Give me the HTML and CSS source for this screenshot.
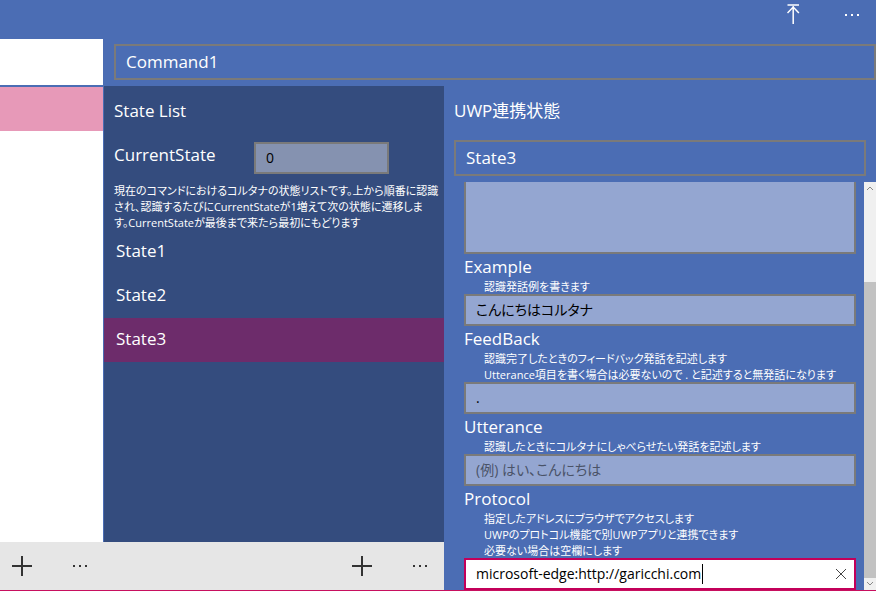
FILE: index.html
```html
<!DOCTYPE html>
<html lang="ja">
<head>
<meta charset="utf-8">
<title>Command1</title>
<link rel="stylesheet" href="styles.css">
</head>
<body>
<header class="topbar">
  <button class="icon-btn" type="button" aria-label="Upload">
    <svg class="upload" width="14" height="21" viewBox="0 0 14 21"><path d="M.5 1h11.5M6.2 2v18M.5 9l5.7-6 5.7 6"/></svg>
  </button>
  <button class="icon-btn" type="button" aria-label="More">
    <svg class="dots" width="14" height="2" viewBox="0 0 14 2"><path d="M0 0h2v2H0zM6 0h2v2H6zM12 0h2v2h-2z"/></svg>
  </button>
</header>
<main class="workspace">
  <aside class="commands">
    <ul class="command-list">
      <li class="command"></li>
      <li class="command selected"></li>
    </ul>
    <div class="appbar">
      <button class="icon-btn" type="button" aria-label="Add command">
        <svg class="plus" width="20" height="20" viewBox="0 0 20 20"><path d="M0 10h20M10 0v20"/></svg>
      </button>
      <button class="icon-btn" type="button" aria-label="More commands">
        <svg class="dots" width="14" height="2" viewBox="0 0 14 2"><path d="M0 0h2v2H0zM6 0h2v2H6zM12 0h2v2h-2z"/></svg>
      </button>
    </div>
  </aside>
  <div class="detail">
    <div class="command-row"><input class="box title-box" type="text" value="Command1" aria-label="Command name"></div>
    <div class="panes">
      <section class="states">
        <h2 class="heading">State List</h2>
        <div class="current">
          <label class="label" for="current">CurrentState</label>
          <input class="box field-box count" id="current" type="text" value="0">
        </div>
        <p class="note">現在のコマンドにおけるコルタナの状態リストです。上から順番に認識<br>され、認識するたびにCurrentStateが1増えて次の状態に遷移しま<br>す。CurrentStateが最後まで来たら最初にもどります</p>
        <ul class="state-list">
          <li><button class="state" type="button">State1</button></li>
          <li><button class="state" type="button">State2</button></li>
          <li><button class="state selected" type="button">State3</button></li>
        </ul>
        <div class="appbar end">
          <button class="icon-btn" type="button" aria-label="Add state">
            <svg class="plus" width="20" height="20" viewBox="0 0 20 20"><path d="M0 10h20M10 0v20"/></svg>
          </button>
          <button class="icon-btn" type="button" aria-label="More state commands">
            <svg class="dots" width="14" height="2" viewBox="0 0 14 2"><path d="M0 0h2v2H0zM6 0h2v2H6zM12 0h2v2h-2z"/></svg>
          </button>
        </div>
      </section>
      <section class="editor">
        <h2 class="heading">UWP連携状態</h2>
        <div class="name-row"><input class="box title-box" type="text" value="State3" aria-label="State name"></div>
        <div class="scroller">
          <form class="fields">
            <textarea class="box field-box area" aria-label="Listen for"></textarea>
            <label class="label" for="example">Example</label>
            <p class="hint">認識発話例を書きます</p>
            <input class="box field-box" id="example" type="text" value="こんにちはコルタナ">
            <label class="label" for="feedback">FeedBack</label>
            <p class="hint">認識完了したときのフィードバック発話を記述します<br>Utterance項目を書く場合は必要ないので . と記述すると無発話になります</p>
            <input class="box field-box" id="feedback" type="text" value=".">
            <label class="label" for="utterance">Utterance</label>
            <p class="hint">認識したときにコルタナにしゃべらせたい発話を記述します</p>
            <input class="box field-box" id="utterance" type="text" placeholder="(例) はい、こんにちは">
            <label class="label" for="protocol">Protocol</label>
            <p class="hint">指定したアドレスにブラウザでアクセスします<br>UWPのプロトコル機能で別UWPアプリと連携できます<br>必要ない場合は空欄にします</p>
            <div class="active-field">
              <input class="box field-box active" id="protocol" type="text" value="microsoft-edge:http://garicchi.com">
              <span class="caret"></span>
              <button class="clear" type="button" aria-label="Clear">
                <svg width="10" height="10" viewBox="0 0 10 10"><path d="M0 0l10 10M10 0L0 10"/></svg>
              </button>
            </div>
          </form>
          <div class="scrollbar">
            <svg width="8" height="5" viewBox="0 0 8 5"><path d="M1 4l3-3 3 3"/></svg>
            <div class="thumb"></div>
            <svg width="8" height="5" viewBox="0 0 8 5"><path d="M1 1l3 3 3-3"/></svg>
          </div>
        </div>
      </section>
    </div>
  </div>
</main>
</body>
</html>
```
FILE: styles.css
```css
* { box-sizing: border-box; }

body {
  margin: 0;
  height: 100vh;
  display: flex;
  flex-direction: column;
  overflow: hidden;
  background: #4b6db4;
  border-bottom: 1px solid #c80f5f;
  color: #fff;
  font-family: "Open Sans", "Noto Sans CJK JP", sans-serif;
  font-size: 17px;
  font-feature-settings: "palt";
}

h2, p, ul { margin: 0; padding: 0; font-weight: 400; }
ul { list-style: none; }
button, input, textarea { font: inherit; font-feature-settings: "palt"; color: inherit; margin: 0; border-radius: 0; outline: 0; }
svg { display: block; fill: none; stroke: currentColor; }

.icon-btn {
  flex: none;
  display: flex;
  align-items: center;
  justify-content: center;
  width: 48px;
  height: 48px;
  padding: 0;
  border: 0;
  background: none;
}
.dots { fill: currentColor; stroke: none; }
.plus { stroke-width: 2; }
.upload { stroke-width: 1.5; }

.topbar {
  flex: none;
  display: flex;
  justify-content: flex-end;
  gap: 10px;
  height: 39px;
}
.topbar .icon-btn { height: 29px; }

.workspace { flex: 1; min-height: 0; display: flex; gap: 1px; }

.commands { flex: none; width: 103px; display: flex; flex-direction: column; background: #fff; }
.command-list { flex: 1; }
.command { height: 46px; }
.command.selected { border-top: 2px solid #4b6db4; background: #e799b8; }

.appbar {
  flex: none;
  display: flex;
  gap: 10px;
  height: 48px;
  background: #e6e6e6;
  color: #333;
}
.commands .appbar { gap: 12px; margin-right: -1px; }
.commands .icon-btn { width: 48px; }
.commands .icon-btn:first-child { width: 44px; }
.appbar.end { justify-content: flex-end; margin-top: auto; }

.detail { flex: 1; min-width: 0; display: flex; flex-direction: column; }
.command-row { padding: 5px 0 6px 10px; }
.panes { flex: 1; min-height: 0; display: flex; }

.box { display: block; width: 100%; padding: 0 10px 2px; border: 2px solid #7a7a7a; }
.title-box { height: 36px; background: transparent; }
.field-box { height: 32px; background: #94a6d1; color: #000; font-size: 14px; }
.field-box::placeholder { color: #4a5368; opacity: 1; }

.heading { height: 48px; font-size: 17px; line-height: 50px; }
.label { display: block; height: 24px; line-height: 26px; }

.states {
  flex: none;
  width: 340px;
  display: flex;
  flex-direction: column;
  background: #344c7e;
}
.states .heading { padding-left: 10px; }
.current { display: grid; grid-template-columns: 140px 135px; padding: 8px 10px; }
.count { background: #8592b0; }
.note { height: 48px; padding: 1px 10px 0; font-size: 11px; line-height: 16px; white-space: nowrap; }
.state {
  display: block;
  width: 100%;
  height: 44px;
  padding: 0 12px 4px;
  border: 0;
  background: none;
  text-align: left;
}
.state.selected { background: #6d2c6b; }

.editor { flex: 1; min-width: 0; display: flex; flex-direction: column; }
.editor .heading { padding-left: 10px; }
.name-row { padding: 6px 10px; }
.scroller { flex: 1; min-height: 0; display: flex; gap: 8px; padding-left: 20px; }
.fields {
  flex: 1;
  min-width: 0;
  display: flex;
  flex-direction: column;
  justify-content: flex-end;
  overflow: hidden;
}
.fields > * { flex: none; }
.area { height: 96px; resize: none; }
.hint { margin-bottom: -1px; padding: 1px 0 0 20px; font-size: 11px; line-height: 16px; white-space: nowrap; }

.active-field { position: relative; color: #000; }
.active { background: #fff; border-color: #c3005a; }
.caret { position: absolute; left: 238px; top: 6px; width: 1px; height: 20px; background: #000; }
.clear {
  position: absolute;
  right: 2px;
  top: 2px;
  display: flex;
  align-items: center;
  justify-content: center;
  width: 26px;
  height: 28px;
  padding: 0;
  border: 0;
  background: none;
  color: #444;
}

.scrollbar {
  flex: none;
  width: 12px;
  display: flex;
  flex-direction: column;
  align-items: center;
  padding: 4px 0;
  background: #f0f0f0;
  color: #888;
}
.thumb { flex: 1; width: 100%; margin: 91px 0 3px; background: #c2c2c2; }
```
